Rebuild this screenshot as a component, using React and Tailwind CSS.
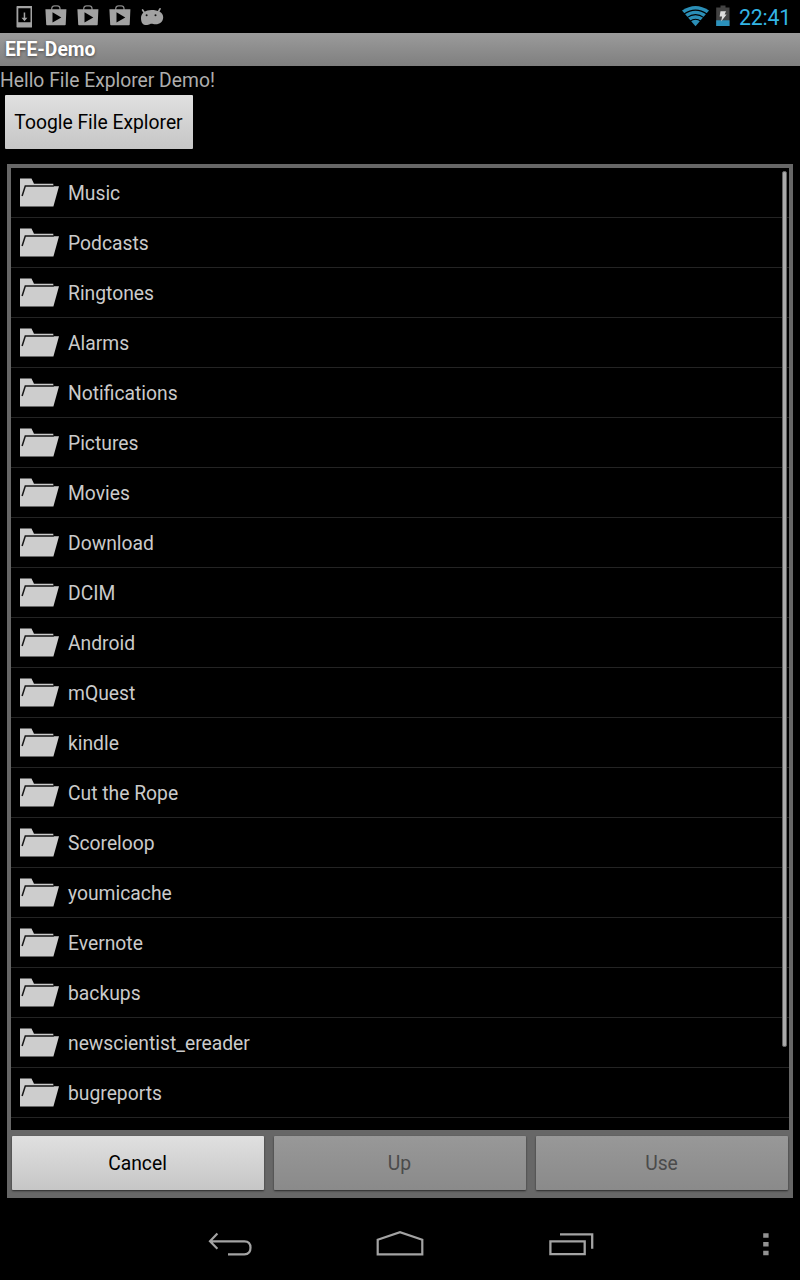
import React from "react";

const folders = [
  "Music", "Podcasts", "Ringtones", "Alarms", "Notifications", "Pictures", "Movies",
  "Download", "DCIM", "Android", "mQuest", "kindle", "Cut the Rope", "Scoreloop",
  "youmicache", "Evernote", "backups", "newscientist_ereader", "bugreports",
];

function DownloadIcon() {
  return (
    <svg className="h-[33px] w-[16px]" viewBox="16 0 16 33">
      <path fillRule="evenodd" fill="#a2a2a2" d="M17.200 6h14.500q.7 0 .7.7v20q0 .7-.7.7H17.200q-.7 0-.7-.7v-20q0-.7.7-.7zM18.300 8.300v14h12.200v-14z" />
      <path fill="#a2a2a2" d="M23.700 12.500h1.500v5.200h2.200L24.500 21.300l-3-3.600h2.200z" />
    </svg>
  );
}

function StoreIcon() {
  return (
    <svg className="h-[33px] w-[22px]" viewBox="45 0 22 33">
      <path d="M51.700 10V8.500Q52 5.800 54.500 5.800h2.800q2.500 0 2.700 2.700V10" fill="none" stroke="#858585" strokeWidth="1.300" />
      <path fillRule="evenodd" fill="#a2a2a2" d="M45.400 9.300h21l-.7 15.200q0 .8-.8.8H47q-.8 0-.8-.8zM52.500 12.300v10.200l8.800-5.100z" />
    </svg>
  );
}

function BeanIcon() {
  return (
    <svg className="h-[33px] w-[24px]" viewBox="140 0 24 33">
      <path d="M142.600 10l2 3M160 8.800l-2 3.700" stroke="#a2a2a2" strokeWidth="1.700" strokeLinecap="round" />
      <path fill="#a2a2a2" d="M141 18c0-5 4.500-8 10.500-8 6.500 0 11.700 2.200 11.700 7.200 0 4.300-3.500 7.100-7.500 7.100-2.400 0-3.700-.8-5.500-.4-1.800.8-3 1.400-5 1.100-3-.4-4.200-3.400-4.200-7z" />
      <circle cx="146.600" cy="15.200" r="1" fill="#111" />
      <circle cx="155.500" cy="15.200" r="1" fill="#111" />
    </svg>
  );
}

function WifiIcon() {
  return (
    <svg className="h-[33px] w-[28px]" viewBox="682 0 28 33">
      <path fill="#2b8fb7" d="M682 10.500Q695.500 1.500 709 10.500L695.500 26.200z" />
      <g fill="none" stroke="#000" strokeWidth="1.100">
        <path d="M684 14Q695.500 6.200 707 14" />
        <path d="M687 17.600Q695.500 11.600 704 17.600" />
        <path d="M690 21.300Q695.500 17.200 701 21.300" />
      </g>
    </svg>
  );
}

function BatteryIcon() {
  return (
    <svg className="h-[33px] w-[14px]" viewBox="716 0 14 33">
      <path fill="#434343" d="M720.500 5.500h5v2h4v18.500h-13.300V7.500h4.300z" />
      <path fill="#2b91bb" d="M716.200 20.300h13.300V26h-13.300z" />
      <path fill="#ddd" d="M720.500 11.300h5.500l-1.400 3.100h2l-5.500 7.100 1-5h-2.500z" />
    </svg>
  );
}

function FolderIcon() {
  return (
    <svg className="h-[30px] w-[41px]" viewBox="0 0 41 30">
      <path fill="#cdcdcd" d="M1 .6h11.500l2.500 5.200h19.300v2.400H40L34.400 28.600H1z" />
      <path fill="none" stroke="#171717" strokeWidth="1.500" d="M34.800 8H6.300L3.100 18" />
    </svg>
  );
}

function BackIcon() {
  return (
    <svg className="h-[30px] w-[44px]" viewBox="208 1230 44 30" fill="none" stroke="#a3a3a3" strokeWidth="2.200">
      <path d="M210 1241.300h34.500q6 0 6 6.500t-6 6.500H228M217.400 1233.500l-7.400 7.800 7.400 7.500" />
    </svg>
  );
}

function HomeIcon() {
  return (
    <svg className="h-[30px] w-[48px]" viewBox="376 1230 48 30" fill="none" stroke="#a3a3a3" strokeWidth="2.200">
      <path d="M377.700 1254.300v-14.600l22.300-7.500 22.300 7.500v14.600z" />
    </svg>
  );
}

function RecentIcon() {
  return (
    <svg className="h-[30px] w-[46px]" viewBox="549 1230 46 30" fill="none" stroke="#a3a3a3" strokeWidth="2.300">
      <path d="M550.400 1241.300h34.300v12.900h-34.300zM560 1234.400h32.200v14.300" />
    </svg>
  );
}

function MenuIcon() {
  return (
    <svg className="h-[30px] w-[6px]" viewBox="0 0 6 30" fill="#929292">
      <path d="M.2 3.200h5.400v4.600H.2zM.2 12h5.400v4.600H.2zM.2 20.700h5.400v4.600H.2z" />
    </svg>
  );
}

const button =
  "h-[54px] rounded-[1px] pt-[2px] pr-[1px] text-center text-[19.300px] leading-[52px] shadow-[0_1px_2px_rgba(0,0,0,0.6)]";
const enabled = "bg-linear-to-b from-[#e0e0e0] to-[#c6c6c6] text-black";
const disabled = "bg-linear-to-b from-[#989898] to-[#8a8a8a] text-[#4b4b4b]";

export default function App() {
  return (
    <div className="flex h-[1280px] w-[800px] flex-col overflow-hidden bg-black font-[Roboto,sans-serif] text-[19.300px] text-[#bebebe]">
      <header className="flex h-[33px] shrink-0 items-center pr-[10px] pl-[16px]">
        <DownloadIcon />
        <div className="ml-[13px] flex gap-[10px]">
          <StoreIcon />
          <StoreIcon />
          <StoreIcon />
        </div>
        <div className="ml-[9px]"><BeanIcon /></div>
        <div className="ml-auto flex items-center">
          <WifiIcon />
          <div className="ml-[6px]"><BatteryIcon /></div>
          <span className="ml-[9px] h-[33px] w-[51px] pt-px text-[21.300px] leading-[33px] tracking-[-0.200px] whitespace-nowrap text-[#33b5e5]">
            22:41
          </span>
        </div>
      </header>
      <h1 className="h-[33px] shrink-0 bg-linear-to-b from-[#9b9b9b] to-[#7f7f7f] pt-px pl-[5px] text-[19.300px] leading-[32px] font-bold text-white [text-shadow:0_1px_3px_#444]">
        EFE-Demo
      </h1>
      <p className="h-[29px] shrink-0 pt-px leading-[28px] whitespace-nowrap text-[#aeaeae]">Hello File Explorer Demo!</p>
      <button className={`ml-[5px] w-[188px] shrink-0 whitespace-nowrap ${button} ${enabled}`}>Toogle File Explorer</button>

      <main className="mx-[7px] mt-[15px] flex h-[1034px] shrink-0 flex-col bg-[#676767] px-[4px] pt-[4px]">
        <div className="relative h-[962px] overflow-hidden bg-black">
          <ul>
            {folders.map((name) => (
              <li key={name} className="flex h-[50px] items-center border-b border-[#242424] pl-[8px]">
                <FolderIcon />
                <span className="ml-[8px] pt-[2px] leading-[46px] text-[#cbcbcb]">{name}</span>
              </li>
            ))}
          </ul>
          <div className="absolute top-[3px] right-[2px] h-[876px] w-[5px] rounded-[2px] border border-[#626262] bg-[#aaa]" />
        </div>
        <div className="mt-[6px] grid grid-cols-3 gap-[10px] px-[1px]">
          <button className={`${button} ${enabled}`}>Cancel</button>
          <button disabled className={`${button} ${disabled}`}>Up</button>
          <button disabled className={`${button} ${disabled}`}>Use</button>
        </div>
      </main>

      <nav className="mt-[32px] flex h-[30px] shrink-0 pl-[208px]">
        <BackIcon />
        <div className="ml-[124px]"><HomeIcon /></div>
        <div className="ml-[125px]"><RecentIcon /></div>
        <div className="ml-[168px]"><MenuIcon /></div>
      </nav>
    </div>
  );
}
